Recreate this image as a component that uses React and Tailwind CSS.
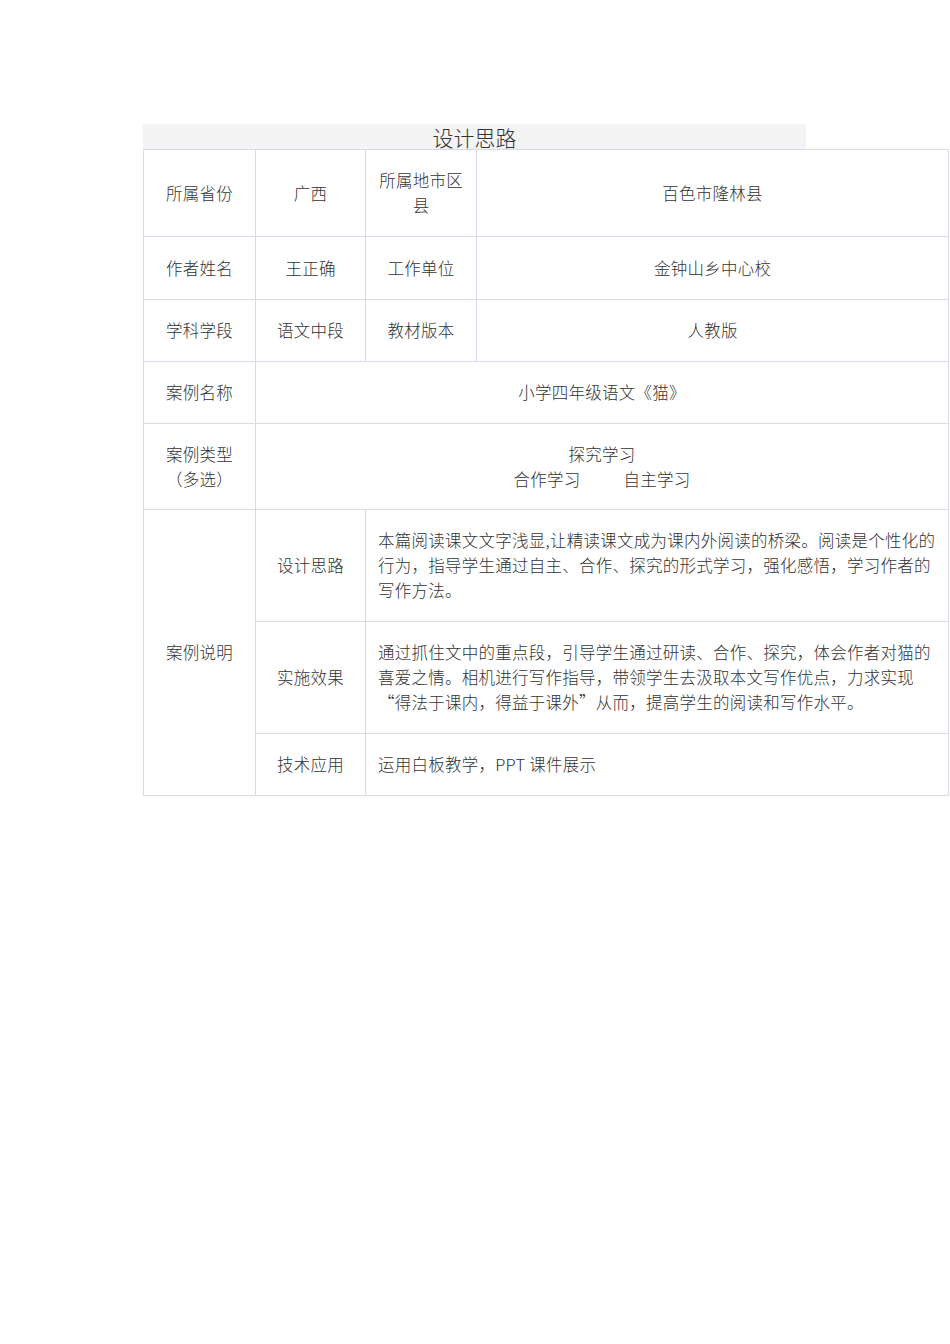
import React from 'react';

const border = 'border border-[#d9dbea]';
const cell = `${border} text-center align-middle px-3`;
const para = `${border} text-left align-middle pl-3 pr-3`;

export default function App() {
  return (
    <div className="min-h-[1344px] w-[950px] bg-white pt-[124px] pl-[143px] text-[16.5px] tracking-[0.25px] leading-[25px] text-[#333] font-light" style={{ fontFamily: '"Noto Sans CJK SC", "Noto Sans", sans-serif' }}>
      <div className="w-[663px] h-[25px] bg-[#f4f4f4] text-center text-[21px] tracking-normal leading-[27px] text-[#333]">设计思路</div>
      <table className="w-[806px] border-collapse table-fixed">
        <colgroup>
          <col className="w-[112px]" />
          <col className="w-[110px]" />
          <col className="w-[111px]" />
          <col />
        </colgroup>
        <tbody>
          <tr className="h-[87px]">
            <td className={cell}>所属省份</td>
            <td className={cell}>广西</td>
            <td className={cell}>所属地市区县</td>
            <td className={cell}>百色市隆林县</td>
          </tr>
          <tr className="h-[63px]">
            <td className={cell}>作者姓名</td>
            <td className={cell}>王正确</td>
            <td className={cell}>工作单位</td>
            <td className={cell}>金钟山乡中心校</td>
          </tr>
          <tr className="h-[62px]">
            <td className={cell}>学科学段</td>
            <td className={cell}>语文中段</td>
            <td className={cell}>教材版本</td>
            <td className={cell}>人教版</td>
          </tr>
          <tr className="h-[62px]">
            <td className={cell}>案例名称</td>
            <td className={cell} colSpan={3}>小学四年级语文《猫》</td>
          </tr>
          <tr className="h-[86px]">
            <td className={cell}>案例类型<br />（多选）</td>
            <td className={cell} colSpan={3}>
              <div>探究学习</div>
              <div>
                <span>合作学习</span>
                <span className="ml-[43px]">自主学习</span>
              </div>
            </td>
          </tr>
          <tr className="h-[112px]">
            <td className={cell} rowSpan={3}>案例说明</td>
            <td className={cell}>设计思路</td>
            <td className={para} colSpan={2}>
              本篇阅读课文文字浅显,让精读课文成为课内外阅读的桥梁。阅读是个性化的行为，指导学生通过自主、合作、探究的形式学习，强化感悟，学习作者的写作方法。
            </td>
          </tr>
          <tr className="h-[112px]">
            <td className={cell}>实施效果</td>
            <td className={para} colSpan={2}>
              通过抓住文中的重点段，引导学生通过研读、合作、探究，体会作者对猫的喜爱之情。相机进行写作指导，带领学生去汲取本文写作优点，力求实现<wbr />“得法于课内，得益于课外”从而，提高学生的阅读和写作水平。
            </td>
          </tr>
          <tr className="h-[62px]">
            <td className={cell}>技术应用</td>
            <td className={para} colSpan={2}>
              运用白板教学，PPT 课件展示
            </td>
          </tr>
        </tbody>
      </table>
    </div>
  );
}
